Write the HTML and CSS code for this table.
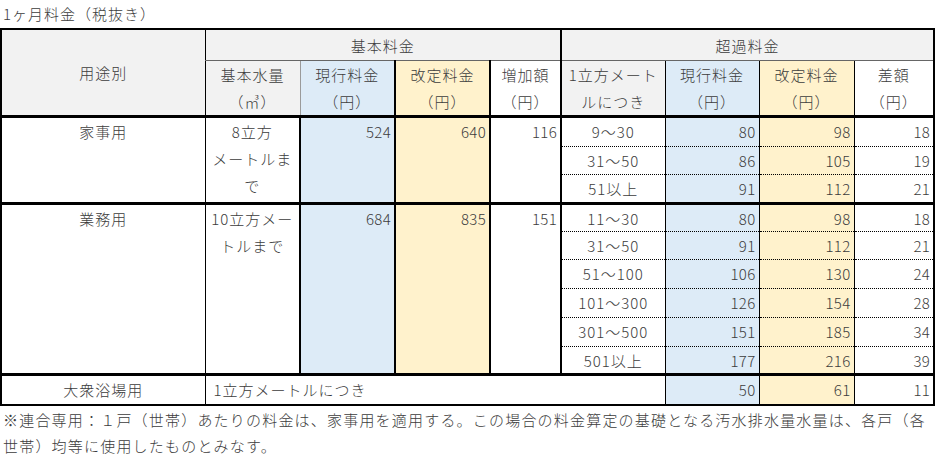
FILE: index.html
```html
<!DOCTYPE html>
<html lang="ja">
<head>
<meta charset="utf-8">
<title>1ヶ月料金</title>
<link rel="stylesheet" href="styles.css">
</head>
<body>
<div class="page">
  <div class="title">1ヶ月料金（税抜き）</div>
  <table class="fee">
    <colgroup>
      <col class="w1"><col class="w2"><col class="w3"><col class="w4"><col class="w5">
      <col class="w6"><col class="w7"><col class="w8"><col class="w9">
    </colgroup>
    <thead>
      <tr class="h1">
        <th rowspan="2" class="gray usage">用途別</th>
        <th colspan="4" class="gray grp bl1">基本料金</th>
        <th colspan="4" class="gray grp bl2">超過料金</th>
      </tr>
      <tr class="h2">
        <th class="gray bl1 sub">基本水量<br>（㎥）</th>
        <th class="blue bll sub">現行料金<br>（円）</th>
        <th class="yellow bl2 sub">改定料金<br>（円）</th>
        <th class="white bl2 sub">増加額<br>（円）</th>
        <th class="gray bl2 sub">1立方メート<br>ルにつき</th>
        <th class="blue bl1 sub">現行料金<br>（円）</th>
        <th class="yellow bl1 sub">改定料金<br>（円）</th>
        <th class="white bl1 sub">差額<br>（円）</th>
      </tr>
    </thead>
    <tbody>
      <tr class="gs h27">
        <td rowspan="3" class="ctr multi">家事用</td>
        <td rowspan="3" class="ctr bl1 multi">8立方<br>メートルま<br>で</td>
        <td rowspan="3" class="num blue bl2 multi">524</td>
        <td rowspan="3" class="num yellow bl2 multi">640</td>
        <td rowspan="3" class="num bl2 multi">116</td>
        <td class="ctr bl2">9～30</td>
        <td class="num blue bl1">80</td>
        <td class="num yellow bl1">98</td>
        <td class="num bl1">18</td>
      </tr>
      <tr class="sr h26">
        <td class="ctr bl2">31～50</td>
        <td class="num blue bl1">86</td>
        <td class="num yellow bl1">105</td>
        <td class="num bl1">19</td>
      </tr>
      <tr class="sr h26">
        <td class="ctr bl2">51以上</td>
        <td class="num blue bl1">91</td>
        <td class="num yellow bl1">112</td>
        <td class="num bl1">21</td>
      </tr>
      <tr class="gs h25">
        <td rowspan="6" class="ctr multi">業務用</td>
        <td rowspan="6" class="ctr bl1 multi">10立方メー<br>トルまで</td>
        <td rowspan="6" class="num blue bl2 multi">684</td>
        <td rowspan="6" class="num yellow bl2 multi">835</td>
        <td rowspan="6" class="num bl2 multi">151</td>
        <td class="ctr bl2">11～30</td>
        <td class="num blue bl1">80</td>
        <td class="num yellow bl1">98</td>
        <td class="num bl1">18</td>
      </tr>
      <tr class="sr h26">
        <td class="ctr bl2">31～50</td>
        <td class="num blue bl1">91</td>
        <td class="num yellow bl1">112</td>
        <td class="num bl1">21</td>
      </tr>
      <tr class="sr h27">
        <td class="ctr bl2">51～100</td>
        <td class="num blue bl1">106</td>
        <td class="num yellow bl1">130</td>
        <td class="num bl1">24</td>
      </tr>
      <tr class="sr h27">
        <td class="ctr bl2">101～300</td>
        <td class="num blue bl1">126</td>
        <td class="num yellow bl1">154</td>
        <td class="num bl1">28</td>
      </tr>
      <tr class="sr h27">
        <td class="ctr bl2">301～500</td>
        <td class="num blue bl1">151</td>
        <td class="num yellow bl1">185</td>
        <td class="num bl1">34</td>
      </tr>
      <tr class="sr h25">
        <td class="ctr bl2">501以上</td>
        <td class="num blue bl1">177</td>
        <td class="num yellow bl1">216</td>
        <td class="num bl1">39</td>
      </tr>
      <tr class="gs h27">
        <td class="ctr">大衆浴場用</td>
        <td colspan="5" class="left bl1">1立方メートルにつき</td>
        <td class="num blue bl1">50</td>
        <td class="num yellow bl1">61</td>
        <td class="num bl1">11</td>
      </tr>
    </tbody>
  </table>
  <p class="note">※連合専用：１戸（世帯）あたりの料金は、家事用を適用する。この場合の料金算定の基礎となる汚水排水量水量は、各戸（各世帯）均等に使用したものとみなす。</p>
</div>
</body>
</html>
```

FILE: styles.css
```css
html, body {
  margin: 0;
  padding: 0;
  background: #ffffff;
}

.page {
  width: 935px;
  font-family: "Noto Sans CJK JP", "Noto Sans", sans-serif;
  font-weight: 300;
  font-size: 15px;
  color: #3c3c3c;
}

.title {
  height: 28px;
  line-height: 28px;
  padding-left: 3px;
  letter-spacing: 1px;
}

.fee {
  width: 933px;
  table-layout: fixed;
  border-collapse: collapse;
  border: 2px solid #000;
}

.w1 { width: 204px; }
.w2 { width: 95px; }
.w3 { width: 95px; }
.w4 { width: 95px; }
.w5 { width: 71px; }
.w6 { width: 104px; }
.w7 { width: 94px; }
.w8 { width: 95px; }
.w9 { width: 80px; }

.fee th,
.fee td {
  padding: 0 3px;
  border: 0 none;
  font-weight: 300;
  letter-spacing: 1px;
  line-height: 27px;
  vertical-align: top;
}

.fee td {
  line-height: 25px;
  padding-top: 1px;
}

.fee td.multi {
  line-height: 27px;
  padding-top: 0;
}

.fee th {
  text-align: center;
  vertical-align: middle;
}

.fee .h1 th { height: 30px; }
.fee .h1 .usage { border-bottom: 3px solid #000; }
.fee .h1 .grp { border-bottom: 1px solid #666; }
.fee .h2 th { height: 53px; border-bottom: 3px solid #000; }

.gray { background: #f2f2f2; }
.blue { background: #ddebf7; }
.yellow { background: #fff2cc; }
.white { background: #ffffff; }

.bl1 { border-left: 1px solid #000 !important; }
.bll { border-left: 1px solid #9a9a9a !important; }
.bl2 { border-left: 2px solid #000 !important; }

.gs td { border-top: 3px solid #000; }
.sr td { border-top: 1px dotted #000; }

.fee .h25 td { height: 25px; }
.fee .h26 td { height: 26px; }
.fee .h27 td { height: 27px; }

.fee .num { text-align: right; letter-spacing: 0.3px; }
.fee .ctr { text-align: center; }
.fee .left { text-align: left; padding-left: 8px; }

.note {
  margin: 0;
  padding: 1px 0 0 3px;
  line-height: 26px;
  letter-spacing: 1.2px;
}
```
